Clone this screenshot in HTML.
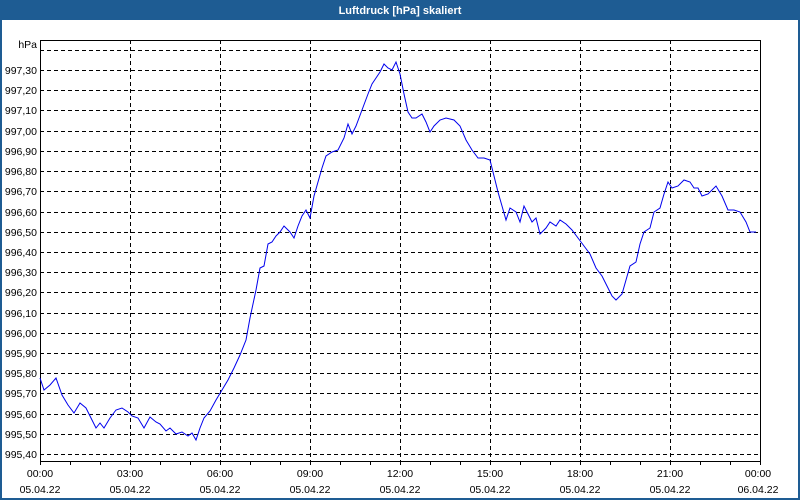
<!DOCTYPE html>
<html><head><meta charset="utf-8"><style>
html,body{margin:0;padding:0;background:#fff}
svg{display:block}
text{font-family:"Liberation Sans",sans-serif;font-size:10.5px;fill:#000}
</style></head><body>
<svg width="800" height="500" xmlns="http://www.w3.org/2000/svg">
<rect x="0" y="0" width="800" height="500" fill="#1e5c93"/>
<rect x="2" y="20" width="796" height="478" fill="#fff"/>
<text x="400" y="14" text-anchor="middle" style="fill:#fff;font-weight:bold;font-size:11px">Luftdruck [hPa] skaliert</text>
<g stroke="#000" stroke-dasharray="4,3" stroke-width="1">
<line x1="40" y1="50.5" x2="760" y2="50.5"/>
<line x1="40" y1="70.5" x2="760" y2="70.5"/>
<line x1="40" y1="90.5" x2="760" y2="90.5"/>
<line x1="40" y1="110.5" x2="760" y2="110.5"/>
<line x1="40" y1="131.5" x2="760" y2="131.5"/>
<line x1="40" y1="151.5" x2="760" y2="151.5"/>
<line x1="40" y1="171.5" x2="760" y2="171.5"/>
<line x1="40" y1="191.5" x2="760" y2="191.5"/>
<line x1="40" y1="212.5" x2="760" y2="212.5"/>
<line x1="40" y1="232.5" x2="760" y2="232.5"/>
<line x1="40" y1="252.5" x2="760" y2="252.5"/>
<line x1="40" y1="272.5" x2="760" y2="272.5"/>
<line x1="40" y1="292.5" x2="760" y2="292.5"/>
<line x1="40" y1="313.5" x2="760" y2="313.5"/>
<line x1="40" y1="333.5" x2="760" y2="333.5"/>
<line x1="40" y1="353.5" x2="760" y2="353.5"/>
<line x1="40" y1="373.5" x2="760" y2="373.5"/>
<line x1="40" y1="393.5" x2="760" y2="393.5"/>
<line x1="40" y1="414.5" x2="760" y2="414.5"/>
<line x1="40" y1="434.5" x2="760" y2="434.5"/>
<line x1="40" y1="454.5" x2="760" y2="454.5"/>
<line x1="130.5" y1="40" x2="130.5" y2="461"/>
<line x1="220.5" y1="40" x2="220.5" y2="461"/>
<line x1="310.5" y1="40" x2="310.5" y2="461"/>
<line x1="400.5" y1="40" x2="400.5" y2="461"/>
<line x1="490.5" y1="40" x2="490.5" y2="461"/>
<line x1="580.5" y1="40" x2="580.5" y2="461"/>
<line x1="670.5" y1="40" x2="670.5" y2="461"/>
</g>
<path d="M40.5 40.5H760.5V461.5H40.5Z" fill="none" stroke="#000"/>
<g stroke="#000">
<path d="M40.5 461v4M70.5 461v4M100.5 461v4M130.5 461v4M160.5 461v4M190.5 461v4M220.5 461v4M250.5 461v4M280.5 461v4M310.5 461v4M340.5 461v4M370.5 461v4M400.5 461v4M430.5 461v4M460.5 461v4M490.5 461v4M520.5 461v4M550.5 461v4M580.5 461v4M610.5 461v4M640.5 461v4M670.5 461v4M700.5 461v4M730.5 461v4M760.5 461v4"/>
</g>
<g text-anchor="end">
<text x="37" y="48">hPa</text>
<text x="37" y="74">997,30</text><text x="37" y="94">997,20</text><text x="37" y="114">997,10</text>
<text x="37" y="135">997,00</text><text x="37" y="155">996,90</text><text x="37" y="175">996,80</text>
<text x="37" y="195">996,70</text><text x="37" y="216">996,60</text><text x="37" y="236">996,50</text>
<text x="37" y="256">996,40</text><text x="37" y="276">996,30</text><text x="37" y="296">996,20</text>
<text x="37" y="317">996,10</text><text x="37" y="337">996,00</text><text x="37" y="357">995,90</text>
<text x="37" y="377">995,80</text><text x="37" y="397">995,70</text><text x="37" y="418">995,60</text>
<text x="37" y="438">995,50</text><text x="37" y="458">995,40</text>
</g>
<g text-anchor="middle">
<text x="40" y="477">00:00</text><text x="40" y="493">05.04.22</text>
<text x="130" y="477">03:00</text><text x="130" y="493">05.04.22</text>
<text x="220" y="477">06:00</text><text x="220" y="493">05.04.22</text>
<text x="310" y="477">09:00</text><text x="310" y="493">05.04.22</text>
<text x="400" y="477">12:00</text><text x="400" y="493">05.04.22</text>
<text x="490" y="477">15:00</text><text x="490" y="493">05.04.22</text>
<text x="580" y="477">18:00</text><text x="580" y="493">05.04.22</text>
<text x="670" y="477">21:00</text><text x="670" y="493">05.04.22</text>
<text x="758" y="477">00:00</text><text x="758" y="493">06.04.22</text>
</g>
<polyline fill="none" stroke="#0000ee" stroke-width="1" points="40,378 44,390 50,385 56,378 62,395 68,405 74,413 80,403 86,408 92,420 96,428 100,423 104,428 110,418 116,410 122,408 128,412 132,416 138,418 144,428 150,417 156,422 160,424 166,431 170,428 176,434 182,432 188,436 192,433 196,440 200,428 204,418 210,411 216,400 222,390 228,380 234,368 240,355 246,340 250,318 256,290 260,268 264,266 268,244 272,242 276,236 280,232 284,226 290,232 294,238 298,226 302,216 306,210 310,218 314,196 318,182 322,168 326,156 332,152 338,150 344,138 348,124 352,134 356,126 362,110 368,94 372,84 376,78 380,72 384,64 388,68 392,70 396,62 400,74 404,94 408,112 412,118 416,118 422,114 426,122 430,132 434,126 440,120 446,118 454,120 460,126 466,140 472,150 478,158 484,158 490,160 494,176 498,192 502,206 506,220 510,208 516,212 520,222 524,206 528,214 532,222 536,218 540,234 546,228 550,222 556,226 560,220 566,224 572,230 578,238 584,246 590,254 596,268 602,276 606,284 612,296 616,300 622,294 626,280 630,266 636,262 640,244 644,232 650,228 654,212 660,208 664,194 668,182 672,188 678,186 684,180 690,182 694,188 698,188 702,196 708,194 712,190 716,186 722,196 728,210 734,210 740,212 746,222 750,232 756,232"/>
</svg>
</body></html>
